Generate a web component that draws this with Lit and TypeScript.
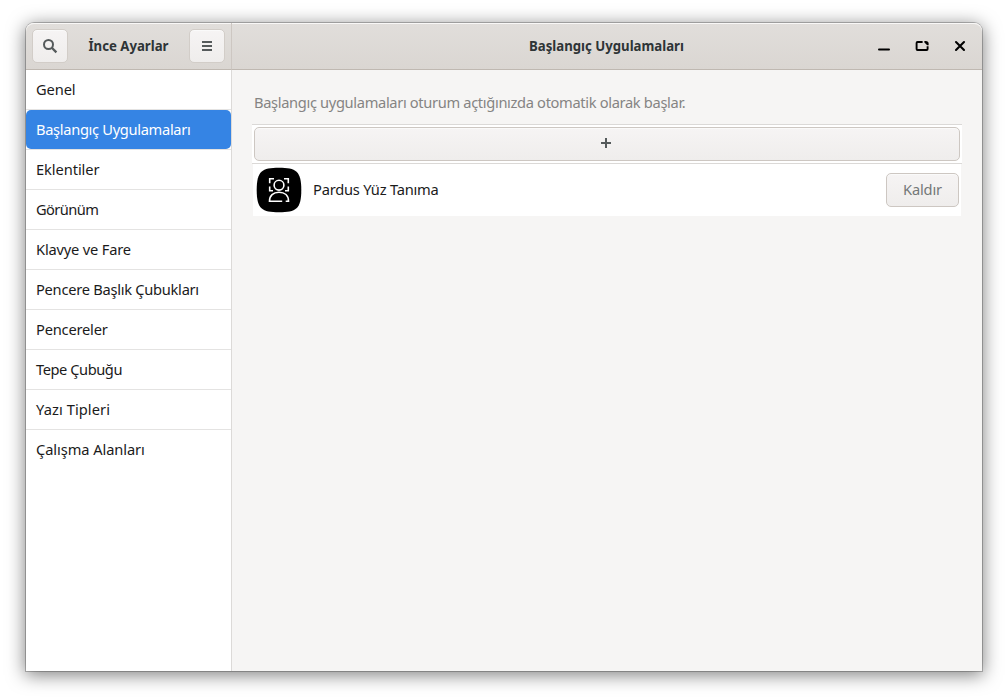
import { LitElement, html, css, svg } from "lit";
import { customElement, property } from "lit/decorators.js";
import { classMap } from "lit/directives/class-map.js";
import { styleMap } from "lit/directives/style-map.js";

// Page name and its letter-spacing in pixels
const PAGES: [string, number][] = [
  ["Genel", -0.1],
  ["Başlangıç Uygulamaları", -0.32],
  ["Eklentiler", -0.08],
  ["Görünüm", -0.6],
  ["Klavye ve Fare", -0.18],
  ["Pencere Başlık Çubukları", -0.27],
  ["Pencereler", -0.2],
  ["Tepe Çubuğu", -0.45],
  ["Yazı Tipleri", 0.08],
  ["Çalışma Alanları", -0.08],
];

const GLYPHS = {
  search: svg`<circle cx="6.5" cy="6.5" r="4.5" fill="none" stroke="currentColor" stroke-width="2"/><path d="M9.8 9.8 14.4 14.4" fill="none" stroke="currentColor" stroke-width="2.3"/>`,
  menu: svg`<path d="M3 3h10v2H3zM3 7h10v2H3zM3 11h10v2H3z" fill="currentColor"/>`,
  add: svg`<path d="M7 3h2v4h4v2H9v4H7V9H3V7h4z" fill="currentColor"/>`,
  minimize: svg`<path d="M3 11.5h10" fill="none" stroke="currentColor" stroke-width="2" stroke-linecap="round"/>`,
  maximize: svg`<path d="M8.6 4H3.5Q2.6 4 2.6 5V11Q2.6 12 3.5 12H12.6Q13.6 12 13.6 11V8.3" fill="none" stroke="currentColor" stroke-width="1.9"/><path d="M10.4 3h1.2Q14.6 3 14.6 5.6V7.2H13.2L10.4 4.6z" fill="currentColor"/>`,
  close: svg`<path d="M4 4l8 8M12 4l-8 8" fill="none" stroke="currentColor" stroke-width="2.1" stroke-linecap="round"/>`,
};

@customElement("ui-glyph")
export class UiGlyph extends LitElement {
  @property() name: keyof typeof GLYPHS = "add";
  static styles = css`
    :host { display: block; width: 16px; height: 16px; }
    svg { display: block; }
  `;
  render() {
    return html`<svg width="16" height="16" viewBox="0 0 16 16">${GLYPHS[this.name]}</svg>`;
  }
}

@customElement("face-icon")
export class FaceIcon extends LitElement {
  static styles = css`
    :host { display: block; width: 48px; height: 48px; }
    svg { display: block; }
  `;
  render() {
    return html`<svg width="48" height="48" viewBox="0 0 48 48">
      <path d="M24 1.7C41 1.7 46.3 5 46.3 24S41 46.3 24 46.3 1.7 43 1.7 24 7 1.7 24 1.7z" fill="#000"/>
      <g fill="none" stroke="#fff" stroke-width="1.6">
        <path d="M19 12.7h-4.3v4.5M29 12.7h4.3v4.5M14.7 20.5v4.3h3.3M33.3 20.5v4.3h-3.3"/>
        <circle cx="24" cy="19.2" r="4.9"/>
        <path d="M27.2 35.3H14.5C14.5 29.6 18.2 26.3 24 26.3S33.5 29.6 33.5 35.3H30.7"/>
      </g>
    </svg>`;
  }
}

@customElement("app-root")
export class AppRoot extends LitElement {
  @property() current = "Başlangıç Uygulamaları";

  static styles = css`
    :host {
      display: block;
      box-sizing: border-box;
      height: 700px;
      padding: 23px 26px 29px;
      background: #fff;
      color: #1b1b1b;
      font: 14.67px/20px "Noto Sans", sans-serif;
    }
    * { box-sizing: border-box; }
    .window {
      display: grid;
      grid-template: 47px 1fr / 206px 1fr;
      height: 648px;
      border-radius: 8px 8px 0 0;
      background: #f6f5f4;
      box-shadow: 0 0 0 1px rgba(0, 0, 0, 0.23), 0 3px 18px 1px rgba(0, 0, 0, 0.5);
    }
    .bar {
      display: flex;
      align-items: center;
      border-bottom: 1px solid #bfb8b1;
      background: linear-gradient(#e1dedb, #dad6d2);
      box-shadow: inset 0 1px #f9f8f7;
      color: #2e3436;
      font-weight: 700;
    }
    .bar-side {
      justify-content: space-between;
      padding: 0 6px;
      border-right: 1px solid #cdc7c2;
      border-radius: 8px 0 0 0;
    }
    .bar-main {
      border-radius: 0 8px 0 0;
      padding: 0 14px 0 105px;
    }
    .title {
      padding-bottom: 2px;
      white-space: nowrap;
      transform: scaleX(0.9);
    }
    .title-main { flex: 1; text-align: center; }
    .controls { display: flex; gap: 22px; color: #000; }
    .button {
      display: flex;
      align-items: center;
      justify-content: center;
      height: 34px;
      padding: 0;
      border: 1px solid #cdc7c2;
      border-radius: 5px;
      background: linear-gradient(#f6f4f4, #efedec);
      box-shadow: inset 0 1px #fafafa;
      color: #555a5b;
      font: inherit;
    }
    .square { width: 36px; border-color: #d2cdc8; }
    .sidebar {
      border-right: 1px solid #dcdad8;
      background: #fff;
    }
    .page {
      height: 40px;
      border-bottom: 1px solid #e4e3e2;
      white-space: nowrap;
      line-height: 19px;
    }
    .page:last-child { border-bottom-color: transparent; }
    .label { height: 39px; padding: 10px; border-radius: 5px; }
    .selected .label { background: #3584e4; color: #fff; }
    .content { padding: 22px 20px; }
    .hint {
      margin: 0 2px 12px;
      color: #858483;
      white-space: nowrap;
      letter-spacing: -0.34px;
    }
    .add-row {
      height: 40px;
      padding: 2px 2px 0;
      border: 1px solid #dbd9d7;
      border-width: 1px 0;
      background: #fff;
    }
    .add { width: 100%; padding: 0 2px 2px 0; }
    .app-row {
      display: flex;
      align-items: center;
      height: 52px;
      margin: 0 1px;
      padding: 0 2px;
      background: #fff;
    }
    .name { flex: 1; margin-left: 10px; padding-bottom: 2px; letter-spacing: -0.22px; }
    .remove { width: 73px; padding-bottom: 2px; color: #747878; letter-spacing: -0.15px; }
  `;

  render() {
    return html`
      <div class="window">
        <header class="bar bar-side">
          <button class="button square"><ui-glyph name="search"></ui-glyph></button>
          <span class="title">İnce Ayarlar</span>
          <button class="button square"><ui-glyph name="menu"></ui-glyph></button>
        </header>
        <header class="bar bar-main">
          <span class="title title-main">${this.current}</span>
          <div class="controls">
            <ui-glyph name="minimize"></ui-glyph>
            <ui-glyph name="maximize"></ui-glyph>
            <ui-glyph name="close"></ui-glyph>
          </div>
        </header>
        <nav class="sidebar">
          ${PAGES.map(
            ([name, spacing]) => html`<div class=${classMap({ page: true, selected: name === this.current })}>
              <div class="label" style=${styleMap({ letterSpacing: `${spacing}px` })}>${name}</div>
            </div>`
          )}
        </nav>
        <main class="content">
          <p class="hint">Başlangıç uygulamaları oturum açtığınızda otomatik olarak başlar.</p>
          <div class="add-row"><button class="button add"><ui-glyph name="add"></ui-glyph></button></div>
          <div class="app-row">
            <face-icon></face-icon>
            <span class="name">Pardus Yüz Tanıma</span>
            <button class="button remove">Kaldır</button>
          </div>
        </main>
      </div>
    `;
  }
}
